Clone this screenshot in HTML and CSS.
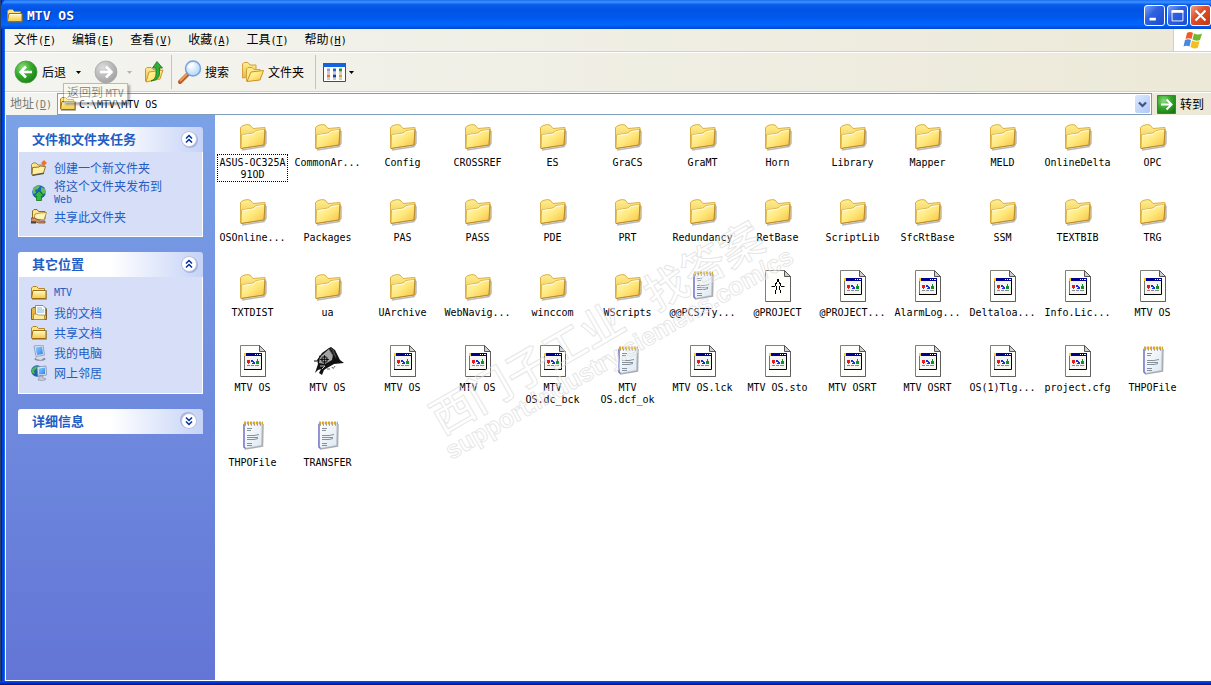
FILE: index.html
```html
<!DOCTYPE html>
<html lang="zh-CN">
<head>
<meta charset="utf-8">
<title>MTV OS</title>
<link rel="stylesheet" href="styles.css">
</head>
<body>
<svg class="defs" width="0" height="0" aria-hidden="true">
  <defs>
    <linearGradient id="gFolder" x1="0" y1="0" x2="1" y2="1"><stop offset="0" stop-color="#fffbc4"/><stop offset=".5" stop-color="#ffe87c"/><stop offset="1" stop-color="#f5c040"/></linearGradient>
    <linearGradient id="gBack" x1="0" y1="0" x2="0" y2="1"><stop offset="0" stop-color="#fff090"/><stop offset="1" stop-color="#e8b840"/></linearGradient>
    <linearGradient id="gSmall" x1="0" y1="0" x2="0" y2="1"><stop offset="0" stop-color="#fffac8"/><stop offset="1" stop-color="#f5c842"/></linearGradient>
    <radialGradient id="gGreen" cx=".35" cy=".3" r=".8"><stop offset="0" stop-color="#8ddc7c"/><stop offset=".5" stop-color="#35a82c"/><stop offset="1" stop-color="#167a12"/></radialGradient>
    <radialGradient id="gGray" cx=".35" cy=".3" r=".8"><stop offset="0" stop-color="#dcdcdc"/><stop offset="1" stop-color="#9c9c9c"/></radialGradient>
    <radialGradient id="gLens" cx=".4" cy=".35" r=".7"><stop offset="0" stop-color="#ffffff"/><stop offset="1" stop-color="#a8d4fa"/></radialGradient>
    <linearGradient id="gNote" x1="0" y1="0" x2="1" y2="1"><stop offset="0" stop-color="#ffffff"/><stop offset="1" stop-color="#dce8f2"/></linearGradient>
    <linearGradient id="gScreen" x1="0" y1="0" x2="1" y2="1"><stop offset="0" stop-color="#8fd0ff"/><stop offset="1" stop-color="#2f83e8"/></linearGradient>
  </defs>
  <symbol id="folder" viewBox="1 0 32 32">
    <path d="M6 30 28 26.500 30 23V11" fill="none" stroke="#8c8c8c" stroke-opacity=".6" stroke-width="1.500"/>
    <path d="M4.500 28V7.500L7 5.500Q11 4 14 5L17 8.500 29 7.500V24Z" fill="url(#gBack)" stroke="#dcae48"/>
    <path d="M5 28.500 5.500 15 17 13 20 10.500 29 9.500 28 25Z" fill="url(#gFolder)" stroke="#d8a840" stroke-width=".8"/>
    <path d="M6.500 15.500 17.500 14 20.500 11.500 28 10.500" fill="none" stroke="#fffde8"/>
    <path d="M5 28.500 28 25 29 9.500" fill="none" stroke="#b88a30"/>
  </symbol>
  <symbol id="page" viewBox="0 0 32 32">
    <path d="M3.500 .500H22.500L28.500 6.500V31.500H3.500Z" fill="#fffffb" stroke="#808078"/>
    <path d="M28.500 6.500V31.500H4" fill="none" stroke="#606060"/>
    <path d="M22.500 .500V6.500H28.500Z" fill="#d0d0d0" stroke="#555"/>
  </symbol>
  <symbol id="app" viewBox="0 0 32 32">
    <use href="#page"/>
    <path d="M8 11H24V24H8Z" fill="#f4f4f0"/><path d="M7 8H25V11H7Z" fill="#000090"/>
    <path d="M7 8H9V11H7Z" fill="#ffc820"/><path d="M18 9h1v1h-1zM20 9h1v1h-1zM22 9h2v1h-2z" fill="#fff"/>
    <path d="M7.500 11V24" stroke="#777"/><path d="M24.500 11V24.500H7" fill="none" stroke="#000"/>
    <path d="M10 15h3v3h-1v1h-1v-1h-1z" fill="#e81818"/><path d="M14 15h2v1h1v1h1v2h-3v-1h1v-1h-2z" fill="#1830e0"/><path d="M20 14h1v2h1v3h-3v-3h1z" fill="#0c9028"/>
    <path d="M10 20.500h3M14 20.500h3M18 20.500h4" stroke="#888"/>
  </symbol>
  <symbol id="compass" viewBox="0 0 32 32">
    <use href="#page"/>
    <path d="M15 9h2v3h-2z"/><path d="M14 12h1v2h-1zM17 12h1v2h-1zM13 13h1v3h-1zM18 13h1v3h-1z"/>
    <path d="M9.500 16.500H13M19 16.500H22.500M14.500 16v4M13.500 20v4M17.500 16v4M18.500 20v3" fill="none" stroke="#000"/>
  </symbol>
  <symbol id="note" viewBox="0 0 32 32">
    <path d="M8 29 25.500 26 26 4" fill="none" stroke="#777" stroke-width="1.500" opacity=".6"/>
    <path d="M7 3H25L24.500 25.500 8 28.500 6.500 27Z" fill="url(#gNote)" stroke="#a0acc0" stroke-width=".6"/>
    <path d="M7 4V27L8.500 28.500" fill="none" stroke="#7470c8" stroke-width="1.400"/>
    <path d="M7 3H26" stroke="#d8aa24" stroke-width="3" stroke-dasharray="2 1"/><path d="M8 5H25" stroke="#686090" stroke-dasharray="1 2"/>
    <path d="M10 8.500h5M10 10.500h4M10 15.500h7l5-1M10 17.500h11M10 19.500h7l4-1M10 23.500h5M10 25.500h5" fill="none" stroke="#6b7680" stroke-width=".8"/>
  </symbol>
  <symbol id="bird" viewBox="0 0 32 32">
    <path d="M5 15 10 8 17 3 19 2 23 5 28 15 32 18 22 19 15 23 12 25 10 30 7 28 9 24 6 25 3 28 6 19Z" fill="#111"/>
    <path d="M8 12 17 4 21 10 20 15 13 19 7 18Z" fill="#a5a5a5"/><path d="M17 4l4 7M19 3l4 8M21 4l3 9" stroke="#555" stroke-width=".8"/>
    <circle cx="12.500" cy="14.500" r="3.500" fill="#444"/><circle cx="12.500" cy="14.500" r="1.500" fill="#ddd"/><path d="M12.500 10v9M8 14.500h9" stroke="#000" stroke-width=".8"/>
    <path d="M2 16h3M7 11l2 1" stroke="#000"/><path d="M15 24h3M20 22q1 3 3-1" fill="none" stroke="#555"/><path d="M8 21h5l-3 3" fill="none" stroke="#bbb"/>
  </symbol>
  <symbol id="sfolder" viewBox="0 0 16 16">
    <path d="M1 14.500H15.500V5" fill="none" stroke="#6a6a50" stroke-opacity=".5"/>
    <path d="M.5 13V3L2 1.500H5.500L7.500 3.500H13.500V6" fill="#ffe47c" stroke="#b8862a"/>
    <path d="M2 5.500H14.500L15 6V13.500H1L.5 13Z" fill="url(#gSmall)" stroke="#9c6c18"/><path d="M3 6.500H14" stroke="#fffbe0"/>
  </symbol>
  <symbol id="newfolder" viewBox="0 0 16 16">
    <path d="M.5 14V4.500L2 3H5L7 5H13V8" fill="#ffe88c" stroke="#a88438"/>
    <path d="M1 15 1.500 7.500 8 7 9 6 14.500 6.500 12.500 13Z" fill="#fff0a0" stroke="#8f7130"/><path d="M1.500 15.500 13 13.500" stroke="#444"/><circle cx="13" cy="3" r="2" fill="#f04a14"/><path d="M13 0v6M10 3h6" stroke="#ff7a30"/>
  </symbol>
  <symbol id="publish" viewBox="0 0 16 16">
    <circle cx="8" cy="7" r="6.800" fill="#1767b4"/><path d="M2 4Q5-1 9 1L7 4 4 5 5 8 2 9ZM10 2l4 2 1 4-3 1-2-3Z" fill="#64bd58"/>
    <path d="M8 6 13 11H10.500V15.500H5.500V11H3Z" fill="#35b83c" stroke="#147424" stroke-width=".8"/>
  </symbol>
  <symbol id="share" viewBox="0 0 16 16">
    <path d="M1.500 11V2L3 .500H6L7.500 2.500H14V10Z" fill="#ffe88c" stroke="#8c6c28"/>
    <path d="M3 10 4 5 9 4 15.500 3.500 13 11Z" fill="#fff4b4" stroke="#a28032" stroke-width=".8"/>
    <path d="M0 9h4l5 3h5v2H8l-3-1H0Z" fill="#d59060" stroke="#684020" stroke-width=".7"/><path d="M0 13.500h5" stroke="#444" stroke-width="2"/>
  </symbol>
  <symbol id="docs" viewBox="0 0 16 16">
    <path d="M.5 14.500V4L2 2.500H14L15.500 4V14.500Z" fill="#e7b844" stroke="#7e6230"/>
    <path d="M4.500 .500H12L14.500 3V10.500H4.500Z" fill="#fff" stroke="#6990bd"/><path d="M6 3h5M6 5h7M6 7h7" stroke="#75b8e6"/>
    <path d="M2.500 9H6L7 10H13.500V14.500H2.500Z" fill="#ffe9a0" stroke="#a27a28" stroke-width=".7"/>
  </symbol>
  <symbol id="computer" viewBox="0 0 16 16">
    <ellipse cx="9" cy="14" rx="5.500" ry="1.800" fill="#888aa0"/><path d="M7 10h4l2 3-3 2-5-1Z" fill="#d9dce8"/>
    <path d="M3 1 12 0 13.500 10 5 11.500Z" fill="#dce5f4" stroke="#8794b0" stroke-width=".8"/><path d="M4.500 2.500 11 1.500 12 9 6 10Z" fill="url(#gScreen)"/>
  </symbol>
  <symbol id="network" viewBox="0 0 16 16">
    <circle cx="6" cy="6" r="5.800" fill="#225eaf"/><path d="M1 4 5 .500 6 3 3 6 4 9 1 8Z" fill="#49b950"/>
    <path d="M6 2 15 1 15.500 10 7 11Z" fill="#dfe8f5" stroke="#7d8cb0" stroke-width=".8"/><path d="M7.500 3.500 14 2.500V9L8 9.500Z" fill="url(#gScreen)"/>
    <path d="M9 11h3v2l3 1-3 2-5-1Z" fill="#c4c7d6" stroke="#777c90" stroke-width=".5"/>
  </symbol>
  <symbol id="chev" viewBox="0 0 20 20">
    <circle cx="11" cy="11" r="8" fill="#7d8bbd" opacity=".5"/><circle cx="10" cy="10" r="7.500" fill="#fff" stroke="#b8c2e0"/>
    <path d="M7 9.500 10 6.500 13 9.500M7 13.500 10 10.500 13 13.500" fill="none" stroke="#00309c" stroke-width="1.500"/>
  </symbol>
  <symbol id="caret" viewBox="0 0 5 3"><path d="M0 0H5L2.500 3Z" fill="currentColor"/></symbol>
</svg>

<div class="window">
  <header class="titlebar">
    <svg class="i16"><use href="#sfolder"/></svg>
    <h1>MTV OS</h1>
    <div class="controls">
      <button class="ctl" aria-label="最小化"><svg viewBox="0 0 21 21"><path d="M5 13h7v3H5z" fill="#fff"/></svg></button>
      <button class="ctl" aria-label="最大化"><svg viewBox="0 0 21 21"><path d="M4.500 5.500h12v11h-12z" fill="none" stroke="#fff"/><path d="M4 6h13" stroke="#fff" stroke-width="3"/></svg></button>
      <button class="ctl close" aria-label="关闭"><svg viewBox="0 0 21 21"><path d="M5 5 16 16M16 5 5 16" stroke="#fff" stroke-width="2.400"/></svg></button>
    </div>
  </header>

  <nav class="menubar">
    <button>文件<span class="lat">(<u>F</u>)</span></button>
    <button>编辑<span class="lat">(<u>E</u>)</span></button>
    <button>查看<span class="lat">(<u>V</u>)</span></button>
    <button>收藏<span class="lat">(<u>A</u>)</span></button>
    <button>工具<span class="lat">(<u>T</u>)</span></button>
    <button>帮助<span class="lat">(<u>H</u>)</span></button>
    <div class="flag"><svg width="20" height="18" viewBox="0 0 20 18">
      <path d="M4 2Q7 0 10 2L8.500 8Q5.500 6.500 2.500 8Z" fill="#ee5b25"/><path d="M11 2.500Q15 4.500 19 2.500L17 9Q13 10.500 9.500 8.500Z" fill="#74b62c"/>
      <path d="M2 9Q5 7.500 8 9L6.500 15.500Q3.500 14 .5 15.500Z" fill="#4a88da"/><path d="M9 9.500Q13 11.500 16.500 10L15 16.500Q11 18.500 7.500 16Z" fill="#f5bd20"/>
    </svg></div>
  </nav>

  <div class="toolbar">
    <button class="tool back"><svg width="24" height="24" viewBox="0 0 24 24"><circle cx="12" cy="12" r="11" fill="url(#gGreen)" stroke="#4c9a48" stroke-width=".8"/><path d="M18 12H7M12 6.500 6.500 12 12 17.500" fill="none" stroke="#fff" stroke-width="2.500"/></svg><span>后退</span></button>
    <button class="drop" aria-label="后退列表"><svg class="caret"><use href="#caret"/></svg></button>
    <button class="tool forward" aria-label="前进"><svg width="24" height="24" viewBox="0 0 24 24"><circle cx="12" cy="12" r="11" fill="url(#gGray)" stroke="#aaa" stroke-width=".8"/><path d="M6 12H17M12 6.500 17.500 12 12 17.500" fill="none" stroke="#fff" stroke-width="2.500"/></svg></button>
    <button class="drop off" aria-label="前进列表"><svg class="caret"><use href="#caret"/></svg></button>
    <button class="tool up" aria-label="向上"><svg width="20" height="24" viewBox="0 0 20 24"><path d="M1.500 21V9L3 7.500H7L9 9.500 16 8.500V18Z" fill="url(#gBack)" stroke="#c99a30"/><path d="M2 22 5 12 19 10 16 19Z" fill="url(#gFolder)" stroke="#c99a30"/><path d="M7 21Q12 19 12 14V8H8.500L13 1.500 18.500 8H15.500V14Q15 20 7 21Z" fill="#32ad35" stroke="#167520" stroke-width=".8"/></svg></button>
    <span class="sep"></span>
    <button class="tool search"><svg width="24" height="24" viewBox="0 0 24 24"><path d="M2 22 10 14" stroke="#b95c28" stroke-width="4" stroke-linecap="round"/><path d="M2 21 9 14" stroke="#f39a50" stroke-width="2"/><circle cx="15" cy="8.500" r="7.500" fill="url(#gLens)" stroke="#7aa0d8" stroke-width="1.500"/><path d="M11 8Q12 4 16 4" fill="none" stroke="#fff" stroke-width="2"/></svg><span>搜索</span></button>
    <button class="tool folders"><svg width="24" height="24" viewBox="0 0 24 24"><path d="M1.500 18V4L3 2.500H7L9 5H15V16Z" fill="url(#gBack)" stroke="#d3a23c"/><path d="M5.500 21V9L7 7.500H11L13 9.500H19V18Z" fill="#ffe88a" stroke="#d3a23c"/><path d="M6 21.500 10 12 22.500 10.500 19 20Z" fill="url(#gFolder)" stroke="#c89228"/></svg><span>文件夹</span></button>
    <span class="sep"></span>
    <button class="tool views" aria-label="查看"><svg width="23" height="19" viewBox="0 0 23 19"><path d="M.5 .500H22.500V18.500H.5Z" fill="#fff" stroke="#0c54c8"/><path d="M0 0H23V4H0Z" fill="#1263dc"/><path d="M4 5.500h3v3H4z" fill="#9a94c8"/><path d="M10 5.500h3v3h-3z" fill="#2864c8"/><path d="M16 5.500h3v3h-3z" fill="#209828"/><path d="M4 11.500h3v3H4z" fill="#f07040"/><path d="M10 11.500h3v3h-3z" fill="#1740a0"/><path d="M16 11.500h3v3h-3z" fill="#e0a020"/><path d="M4 10h3M10 10h3M16 10h3M4 16h3M10 16h3M16 16h3" stroke="#999"/></svg></button>
    <button class="drop last" aria-label="查看方式"><svg class="caret"><use href="#caret"/></svg></button>
    <div class="tooltip">返回到 <span class="lat">MTV</span></div>
  </div>

  <div class="addressbar">
    <label for="address">地址<span class="lat">(<u>D</u>)</span></label>
    <div class="combo">
      <svg class="i16"><use href="#sfolder"/></svg>
      <input id="address" type="text" value="C:\MTV\MTV OS">
      <button aria-label="打开地址列表"><svg width="9" height="7" viewBox="0 0 9 7"><path d="M1 1.500 4.500 5 8 1.500" fill="none" stroke="#3c5488" stroke-width="2.200"/></svg></button>
    </div>
    <button class="go"><svg width="19" height="19" viewBox="0 0 19 19"><path d="M.5 .500H18.500V18.500H.5Z" fill="url(#gGreen)" stroke="#3c8440"/><path d="M4 9.500H14M9.500 4.500 14.500 9.500 9.500 14.500" fill="none" stroke="#fff" stroke-width="2"/></svg><span>转到</span></button>
  </div>

  <div class="content">
    <aside class="sidebar">
      <section class="panel">
        <h2>文件和文件夹任务<button aria-label="折叠"><svg class="i20"><use href="#chev"/></svg></button></h2>
        <div class="links">
          <a href="#"><svg class="i16"><use href="#newfolder"/></svg><span>创建一个新文件夹</span></a>
          <a href="#" class="two"><svg class="i16"><use href="#publish"/></svg><span>将这个文件夹发布到<br><span class="lat">Web</span></span></a>
          <a href="#"><svg class="i16"><use href="#share"/></svg><span>共享此文件夹</span></a>
        </div>
      </section>
      <section class="panel">
        <h2>其它位置<button aria-label="折叠"><svg class="i20"><use href="#chev"/></svg></button></h2>
        <div class="links places">
          <a href="#"><svg class="i16"><use href="#sfolder"/></svg><span class="lat">MTV</span></a>
          <a href="#"><svg class="i16"><use href="#docs"/></svg><span>我的文档</span></a>
          <a href="#"><svg class="i16"><use href="#sfolder"/></svg><span>共享文档</span></a>
          <a href="#"><svg class="i16"><use href="#computer"/></svg><span>我的电脑</span></a>
          <a href="#"><svg class="i16"><use href="#network"/></svg><span>网上邻居</span></a>
        </div>
      </section>
      <section class="panel">
        <h2>详细信息<button aria-label="展开" class="down"><svg class="i20"><use href="#chev"/></svg></button></h2>
      </section>
    </aside>

    <main class="files">
      <ul class="grid">
        <li class="focus"><svg><use href="#folder"/></svg><span>ASUS-OC325A<br>91OD</span></li>
        <li><svg><use href="#folder"/></svg><span>CommonAr...</span></li>
        <li><svg><use href="#folder"/></svg><span>Config</span></li>
        <li><svg><use href="#folder"/></svg><span>CROSSREF</span></li>
        <li><svg><use href="#folder"/></svg><span>ES</span></li>
        <li><svg><use href="#folder"/></svg><span>GraCS</span></li>
        <li><svg><use href="#folder"/></svg><span>GraMT</span></li>
        <li><svg><use href="#folder"/></svg><span>Horn</span></li>
        <li><svg><use href="#folder"/></svg><span>Library</span></li>
        <li><svg><use href="#folder"/></svg><span>Mapper</span></li>
        <li><svg><use href="#folder"/></svg><span>MELD</span></li>
        <li><svg><use href="#folder"/></svg><span>OnlineDelta</span></li>
        <li><svg><use href="#folder"/></svg><span>OPC</span></li>
        <li><svg><use href="#folder"/></svg><span>OSOnline...</span></li>
        <li><svg><use href="#folder"/></svg><span>Packages</span></li>
        <li><svg><use href="#folder"/></svg><span>PAS</span></li>
        <li><svg><use href="#folder"/></svg><span>PASS</span></li>
        <li><svg><use href="#folder"/></svg><span>PDE</span></li>
        <li><svg><use href="#folder"/></svg><span>PRT</span></li>
        <li><svg><use href="#folder"/></svg><span>Redundancy</span></li>
        <li><svg><use href="#folder"/></svg><span>RetBase</span></li>
        <li><svg><use href="#folder"/></svg><span>ScriptLib</span></li>
        <li><svg><use href="#folder"/></svg><span>SfcRtBase</span></li>
        <li><svg><use href="#folder"/></svg><span>SSM</span></li>
        <li><svg><use href="#folder"/></svg><span>TEXTBIB</span></li>
        <li><svg><use href="#folder"/></svg><span>TRG</span></li>
        <li><svg><use href="#folder"/></svg><span>TXTDIST</span></li>
        <li><svg><use href="#folder"/></svg><span>ua</span></li>
        <li><svg><use href="#folder"/></svg><span>UArchive</span></li>
        <li><svg><use href="#folder"/></svg><span>WebNavig...</span></li>
        <li><svg><use href="#folder"/></svg><span>winccom</span></li>
        <li><svg><use href="#folder"/></svg><span>WScripts</span></li>
        <li><svg><use href="#note"/></svg><span>@@PCS7Ty...</span></li>
        <li><svg><use href="#compass"/></svg><span>@PROJECT</span></li>
        <li><svg><use href="#app"/></svg><span>@PROJECT...</span></li>
        <li><svg><use href="#app"/></svg><span>AlarmLog...</span></li>
        <li><svg><use href="#app"/></svg><span>Deltaloa...</span></li>
        <li><svg><use href="#app"/></svg><span>Info.Lic...</span></li>
        <li><svg><use href="#app"/></svg><span>MTV OS</span></li>
        <li><svg><use href="#app"/></svg><span>MTV OS</span></li>
        <li><svg><use href="#bird"/></svg><span>MTV OS</span></li>
        <li><svg><use href="#app"/></svg><span>MTV OS</span></li>
        <li><svg><use href="#app"/></svg><span>MTV OS</span></li>
        <li><svg><use href="#app"/></svg><span>MTV<br>OS.dc_bck</span></li>
        <li><svg><use href="#note"/></svg><span>MTV<br>OS.dcf_ok</span></li>
        <li><svg><use href="#app"/></svg><span>MTV OS.lck</span></li>
        <li><svg><use href="#app"/></svg><span>MTV OS.sto</span></li>
        <li><svg><use href="#app"/></svg><span>MTV OSRT</span></li>
        <li><svg><use href="#app"/></svg><span>MTV OSRT</span></li>
        <li><svg><use href="#app"/></svg><span>OS(1)Tlg...</span></li>
        <li><svg><use href="#app"/></svg><span>project.cfg</span></li>
        <li><svg><use href="#note"/></svg><span>THPOFile</span></li>
        <li><svg><use href="#note"/></svg><span>THPOFile</span></li>
        <li><svg><use href="#note"/></svg><span>TRANSFER</span></li>
      </ul>
      <div class="watermark">
        <div class="mark-cn"><span>西门子工业</span><span>找答案</span></div>
        <div class="mark-url">support.industry.siemens.com/cs</div>
      </div>
    </main>
  </div>
</div>
</body>
</html>
```
FILE: styles.css
```css
* { box-sizing: border-box; }

body {
  margin: 0;
  font: 12px/12px "Noto Sans CJK SC", sans-serif;
  color: #000;
}

button, input {
  font: inherit;
  color: inherit;
  border: 0;
  padding: 0;
  background: none;
}

svg { display: block; flex: none; overflow: visible; }
.defs { position: absolute; }
.i16 { width: 16px; height: 16px; }
.i20 { width: 20px; height: 20px; }
.lat { font-family: "DejaVu Sans Mono", monospace; font-size: 10px; }

.window {
  display: flex;
  flex-direction: column;
  min-height: 100vh;
  padding: 0 0 4px 5px;
  background:
    linear-gradient(#0a50f0, #0038d8 40%, #001078) bottom / 100% 4px no-repeat,
    linear-gradient(90deg, #24406c 0 1px, #0019b8 1px 2px, #0840dc 2px 4px, #1668f0 4px);
}

/* Title bar */
.titlebar {
  display: flex;
  align-items: center;
  gap: 4px;
  height: 29px;
  margin-left: -4px;
  padding: 2px 0 0 6px;
  border-radius: 7px 0 0 0;
  background: linear-gradient(#1a6cf0, #3c92ff 7%, #0a5cec 16%, #0054e3 35%, #0058ee 60%, #0066ff 85%, #0048d0);
  color: #fff;
}
.titlebar h1 {
  flex: 1;
  margin: 0;
  font: bold 13px/16px "DejaVu Sans Mono", monospace;
  text-shadow: 1px 1px #0a2a90;
}
.controls { display: flex; gap: 2px; }
.ctl {
  width: 21px;
  height: 21px;
  border: 1px solid #fff;
  border-radius: 3px;
  background: linear-gradient(135deg, #7ea4f4, #2e60e0 40%, #1c4cd0);
}
.ctl svg { width: 19px; height: 19px; }
.ctl.close { background: linear-gradient(135deg, #f0a088, #e0502c 40%, #c03810); }

/* Menu bar */
.menubar {
  display: flex;
  height: 23px;
  padding-left: 1px;
  border-bottom: 1px solid #d8d2bd;
  background: linear-gradient(90deg, #f4f4f0, #ece9d8);
}
.menubar button { padding: 0 8px; white-space: nowrap; }
.flag {
  display: flex;
  align-items: center;
  justify-content: center;
  width: 38px;
  margin-left: auto;
  border-left: 1px solid #d8d2bd;
  background: #fff;
}

/* Toolbar */
.toolbar {
  position: relative;
  display: flex;
  align-items: center;
  height: 40px;
  padding-left: 9px;
  border-top: 1px solid #fff;
  border-bottom: 1px solid #d8d2bd;
  background: linear-gradient(90deg, #f4f4f0, #ece9d8);
}
.tool { display: flex; align-items: center; gap: 4px; white-space: nowrap; }
.drop { display: flex; justify-content: center; width: 25px; }
.drop.off { width: 22px; color: #b8b6aa; }
.drop.last { width: 11px; }
.caret { width: 5px; height: 3px; }
.forward { margin-left: 3px; }
.up { margin-left: 4px; }
.sep { width: 1px; height: 34px; margin: 0 7px; background: #c8c5b2; }
.search, .folders { gap: 3px; }
.search { margin-left: -1px; }
.folders { margin-left: 12px; }
.folders + .sep { margin-left: 11px; }
.tooltip {
  position: absolute;
  left: 58px;
  top: 30px;
  z-index: 2;
  padding: 2px 3px;
  border: 1px solid #666;
  background: #fffff0;
  box-shadow: 2px 2px 2px #333;
  opacity: .4;
  white-space: nowrap;
}

/* Address bar */
.addressbar {
  display: flex;
  align-items: center;
  height: 23px;
  padding-left: 5px;
  border-top: 1px solid #fff;
  background: linear-gradient(90deg, #f4f4f0, #ece9d8);
}
.addressbar label { width: 47px; color: #7c7a6c; white-space: nowrap; }
.combo {
  display: flex;
  flex: 1;
  align-items: center;
  gap: 3px;
  height: 22px;
  padding: 0 1px 0 2px;
  border: 1px solid #7f9db9;
  background: #fff;
}
.combo input {
  flex: 1;
  min-width: 0;
  padding-top: 2px;
  font: 10px/12px "DejaVu Sans Mono", monospace;
  outline: 0;
}
.combo button {
  display: flex;
  align-items: center;
  justify-content: center;
  width: 15px;
  height: 18px;
  border-radius: 2px;
  background: linear-gradient(135deg, #dce8ff, #b0c8f6);
}
.go { display: flex; align-items: center; gap: 4px; margin: 0 7px 0 5px; }

/* Content */
.content {
  display: flex;
  flex: 1;
  border: solid #fff;
  border-width: 0 0 1px 1px;
  background: #fff;
}
.sidebar {
  display: flex;
  flex: none;
  flex-direction: column;
  gap: 15px;
  width: 209px;
  padding: 12px;
  background: linear-gradient(#7ba2e7, #6375d6);
}
.panel h2 {
  display: flex;
  align-items: center;
  justify-content: space-between;
  height: 25px;
  margin: 0;
  padding: 0 4px 2px 14px;
  border-radius: 3px 3px 0 0;
  background: linear-gradient(90deg, #fff 50%, #c6d3f7);
  color: #215dc6;
  font-size: 13px;
  line-height: 16px;
}
.down svg { transform: rotate(180deg); }
.links {
  display: flex;
  flex-direction: column;
  gap: 4px;
  padding: 8px 12px 11px;
  border: 1px solid #fff;
  border-top: 0;
  background: #d6dff7;
}
.links a {
  display: flex;
  align-items: center;
  gap: 7px;
  height: 16px;
  color: #215dc6;
  text-decoration: none;
  white-space: nowrap;
}
.links a.two { height: 25px; }
.links.places { padding-bottom: 12px; }

/* File icons */
.files { position: relative; flex: 1; min-width: 0; }
.grid {
  display: grid;
  grid-template-columns: repeat(auto-fill, 75px);
  grid-auto-rows: 75px;
  margin: 0;
  padding: 0;
  list-style: none;
}
.grid li {
  display: flex;
  flex-direction: column;
  align-items: center;
  padding-top: 5px;
  font: 10px/12px "DejaVu Sans Mono", monospace;
  text-align: center;
  white-space: nowrap;
}
.grid svg { width: 32px; height: 32px; }
.grid span { margin-top: 3px; padding: 2px 1px 0; }
.grid .focus span { outline: 1px dotted #000; }

.watermark {
  position: absolute;
  left: 203px;
  top: 287px;
  transform: rotate(-30deg);
  transform-origin: 0 0;
  color: #ffffff30;
  -webkit-text-stroke: 1px #dededec0;
  white-space: nowrap;
  pointer-events: none;
}
.mark-cn { display: flex; gap: 32px; padding-left: 4px; font-size: 43px; line-height: 44px; font-weight: 500; }
.mark-url { font: bold 25px/28px "Liberation Sans", sans-serif; }
```
